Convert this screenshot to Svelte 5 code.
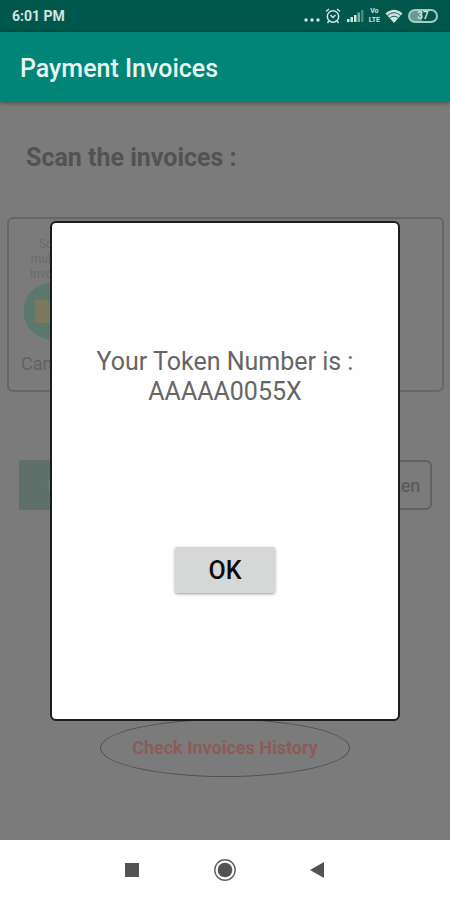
<script lang="ts">
	let isDialogOpen = $state(true);

	const title = 'Payment Invoices';
	const token = 'AAAAA0055X';
</script>

<div class="screen">
	<div class="status-bar">
		<span>6:01 PM</span>
		<div class="status-icons">
			<svg width="16" height="18" viewBox="0 0 16 18" fill="currentColor">
				<circle cx="2" cy="13" r="1.7" />
				<circle cx="8" cy="13" r="1.7" />
				<circle cx="14" cy="13" r="1.7" />
			</svg>
			<svg width="16" height="18" viewBox="0 0 16 18" fill="none" stroke="currentColor" stroke-width="1.5">
				<circle cx="8" cy="9.5" r="5.7" />
				<path d="M1 4.5 4 2M15 4.5 12 2M3.8 14 2.5 16M12.2 14l1.3 2M5.5 8 8 10.5 10.5 8" />
			</svg>
			<svg width="18" height="18" viewBox="0 0 18 18" fill="currentColor">
				<rect x="1" y="12" width="2.5" height="3" />
				<rect x="4.5" y="10" width="2.5" height="5" />
				<rect x="8" y="8" width="2.5" height="7" />
				<rect x="11.5" y="5.5" width="2.5" height="9.5" opacity="0.6" />
				<rect x="15" y="3" width="2.5" height="12" opacity="0.35" />
			</svg>
			<div class="volte">
				<span>Vo</span>
				<span>LTE</span>
			</div>
			<svg width="18" height="18" viewBox="0 0 18 18">
				<path d="M0.5 6.5Q9-1 17.5 6.5L9 16Z" fill="currentColor" />
				<path d="M2.3 8.5Q9 2.8 15.7 8.5M4.6 11Q9 7.4 13.4 11" fill="none" stroke="#00574b" stroke-width="0.9" />
			</svg>
			<span class="battery">37</span>
		</div>
	</div>

	<header class="app-bar">
		<h1>{title}</h1>
	</header>

	<main>
		<h2>Scan the invoices :</h2>

		<section class="scan-card">
			<div class="scan-option">
				<p>Scan<br />multiple<br />Invoices</p>
				<svg width="58" height="58" viewBox="0 0 58 58">
					<circle cx="29" cy="29" r="28.5" fill="#5c776c" />
					<path d="M12 18H24L27 21H46V39Q46 41 44 41H14Q12 41 12 39Z" fill="#7c795f" />
				</svg>
				<span>Camera</span>
			</div>
		</section>

		<div class="actions">
			<button class="upload">Upload</button>
			<button class="token">Get Token</button>
		</div>

		<a class="history" href="#history">Check Invoices History</a>

		{#if isDialogOpen}
			<div class="overlay">
				<div class="dialog" role="dialog" aria-label="Token number">
					<p>Your Token Number is :<br />{token}</p>
					<button onclick={() => (isDialogOpen = false)}>OK</button>
				</div>
			</div>
		{/if}
	</main>

	<nav>
		<button aria-label="Recent apps">
			<svg width="24" height="24" viewBox="0 0 24 24"><rect x="5" y="5" width="14" height="14" fill="#535353" /></svg>
		</button>
		<button aria-label="Home">
			<svg width="24" height="24" viewBox="0 0 24 24">
				<circle cx="12" cy="12" r="10.2" fill="none" stroke="#616161" stroke-width="1.4" />
				<circle cx="12" cy="12" r="7.3" fill="#535353" />
			</svg>
		</button>
		<button aria-label="Back">
			<svg width="24" height="24" viewBox="0 0 24 24"><path d="M4 12 18 4V20Z" fill="#535353" /></svg>
		</button>
	</nav>
</div>

<style>
	:global(body) {
		margin: 0;
	}

	.screen {
		display: flex;
		flex-direction: column;
		min-height: 100vh;
		font-family: Roboto, 'Liberation Sans', sans-serif;
	}

	h1,
	h2,
	p {
		margin: 0;
	}

	button {
		padding: 0;
		border: none;
		font-family: inherit;
		cursor: pointer;
	}

	.status-bar {
		display: flex;
		align-items: center;
		justify-content: space-between;
		height: 32px;
		padding: 0 12px;
		background: #00574b;
		color: #d2e4e0;
		font-size: 14px;
		font-weight: 700;
	}

	.status-icons {
		display: flex;
		align-items: center;
		gap: 5px;
	}

	.volte {
		display: flex;
		flex-direction: column;
		align-items: center;
		font-size: 7px;
		line-height: 9px;
	}

	.battery {
		width: 26px;
		border: 2px solid #a9c8c2;
		border-radius: 8px;
		background: linear-gradient(90deg, #669a92 45%, transparent 45%);
		font-size: 10px;
		line-height: 10px;
		text-align: center;
	}

	.app-bar {
		display: flex;
		align-items: center;
		box-sizing: border-box;
		height: 70px;
		padding: 4px 20px 0;
		background: #008577;
		box-shadow: 0 1px 4px #00000066;
		color: #e8f7f5;
		z-index: 1;
	}

	h1 {
		font-size: 25px;
		font-weight: 500;
		line-height: 32px;
	}

	main {
		position: relative;
		flex: 1;
		display: flex;
		flex-direction: column;
		background: #7b7b7b;
		color: #525252;
	}

	h2 {
		padding: 40px 26px 0;
		font-size: 25px;
		font-weight: 700;
		line-height: 32px;
	}

	.scan-card {
		display: flex;
		margin: 43px 6px 0 7px;
		padding: 18px 12px 14px;
		border: 2px solid #666666;
		border-radius: 6px;
	}

	.scan-option {
		display: flex;
		flex-direction: column;
		align-items: center;
		color: #626262;
		font-size: 18px;
		line-height: 24px;

		> p {
			color: #6b6b6b;
			font-size: 12px;
			line-height: 15px;
			text-align: center;
		}

		> span {
			margin-top: 12px;
		}
	}

	.actions {
		display: flex;
		justify-content: space-between;
		padding: 68px 18px 0 19px;

		> button {
			box-sizing: border-box;
			width: 104px;
			height: 50px;
			font-size: 18px;
			font-weight: 500;
		}

		> .upload {
			width: 112px;
			background: #5f706b;
			color: #6b7875;
		}

		> .token {
			border: 2px solid #626262;
			border-radius: 6px;
			background: transparent;
			color: #5b5b5b;
		}
	}

	.history {
		align-self: center;
		box-sizing: border-box;
		width: 250px;
		margin-top: 209px;
		border: 1px solid #525252;
		border-radius: 50%;
		color: #8b5b58;
		font-size: 18px;
		font-weight: 700;
		line-height: 56px;
		text-align: center;
		text-decoration: none;
	}

	.overlay {
		position: absolute;
		inset: 0;
		display: flex;
		align-items: center;
		padding: 0 50px;
	}

	.dialog {
		flex: 1;
		display: flex;
		flex-direction: column;
		align-items: center;
		box-sizing: border-box;
		padding: 124px 24px 126px;
		border: 2px solid #1c1c1c;
		border-radius: 6px;
		background: #fefefe;
		color: #666666;

		> p {
			font-size: 25px;
			line-height: 30px;
			text-align: center;
		}

		> button {
			width: 100px;
			height: 46px;
			margin-top: 140px;
			border-radius: 2px;
			background: #d5d8d7;
			box-shadow: 0 1px 3px #00000066;
			color: #0c0c0c;
			font-size: 25px;
			font-weight: 500;
		}
	}

	nav {
		display: flex;
		align-items: center;
		justify-content: center;
		gap: 69px;
		height: 60px;
		background: #fefefe;

		> button {
			display: flex;
			background: transparent;
		}
	}
</style>
